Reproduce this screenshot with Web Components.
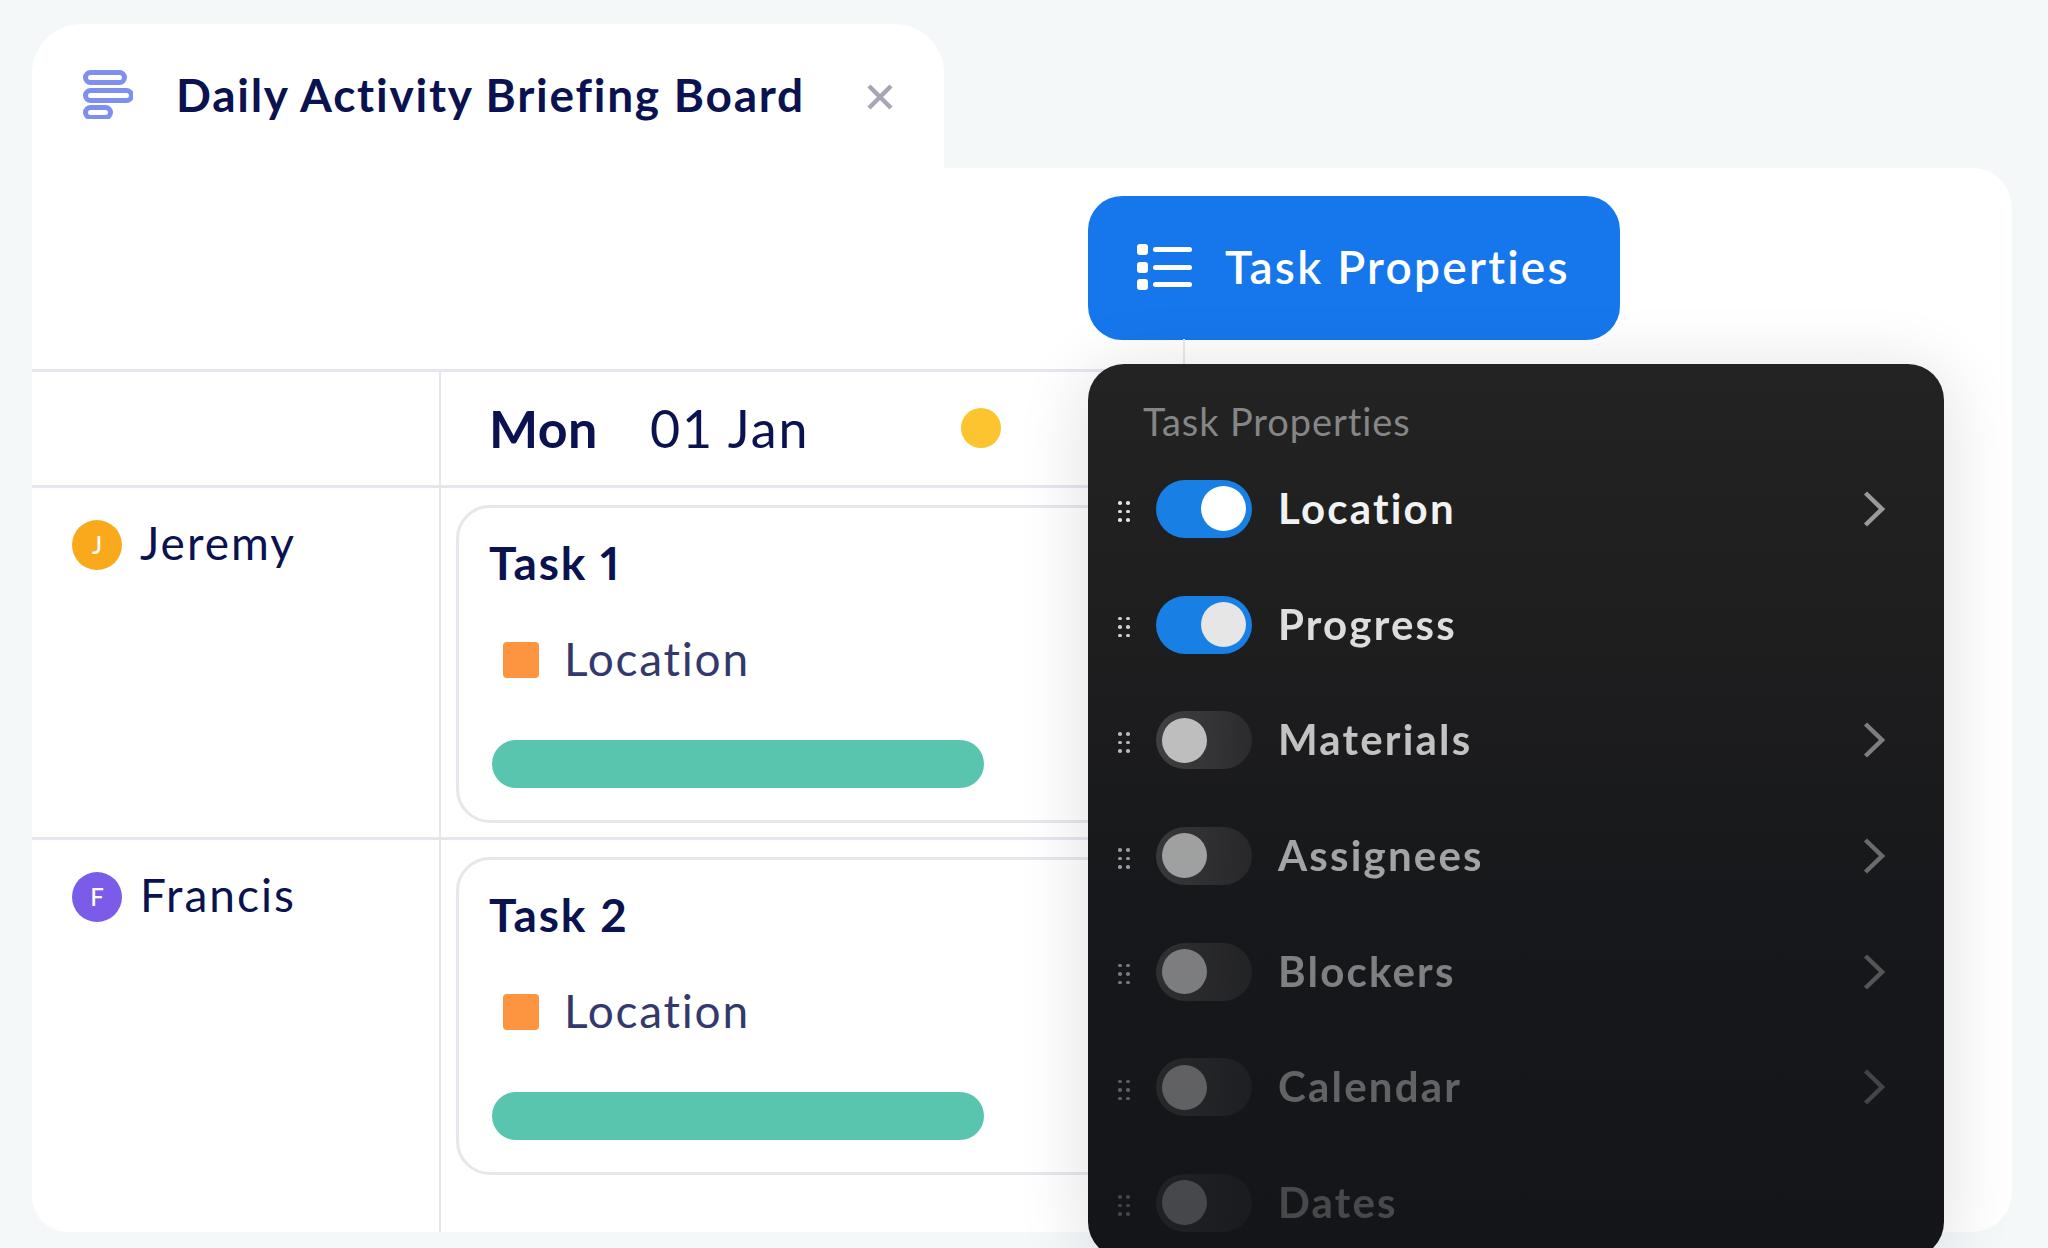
<!DOCTYPE html>
<html lang="en">
<head>
<meta charset="utf-8">
<title>Daily Activity Briefing Board</title>
<style>
	html, body { margin: 0; height: 1248px; overflow: hidden; background: #f5f8f9; }
	body { font-family: Lato, "Open Sans", sans-serif; color: #0b1250; }
</style>
</head>
<body>
<briefing-board>
	<board-tab slot="tab">Daily Activity Briefing Board</board-tab>
	<task-button slot="action">Task Properties</task-button>
	<board-row slot="rows" kind="head">
		<day-heading day="Mon" date="01 Jan"></day-heading>
	</board-row>
	<board-row slot="rows" name="Jeremy" initial="J" color="#fba91c">
		<task-card title-text="Task 1"></task-card>
	</board-row>
	<board-row slot="rows" kind="last" name="Francis" initial="F" color="#7b5ce8">
		<task-card title-text="Task 2"></task-card>
	</board-row>
	<property-panel slot="panel" heading="Task Properties">
		<property-row fade="1" on chevron>Location</property-row>
		<property-row fade=".9" on>Progress</property-row>
		<property-row fade=".78" chevron>Materials</property-row>
		<property-row fade=".64" chevron>Assignees</property-row>
		<property-row fade=".48" chevron>Blockers</property-row>
		<property-row fade=".35" chevron>Calendar</property-row>
		<property-row fade=".23">Dates</property-row>
	</property-panel>
</briefing-board>

<script>
// ─── Helper ──────────────────────────────────────────────────────────────────

/** @param {string} tag @param {string} html */
function define(tag, html, setup) {
	const tpl = document.createElement("template");
	tpl.innerHTML = html;
	customElements.define(tag, class extends HTMLElement {
		constructor() {
			super();
			this.attachShadow({ mode: "open" }).appendChild(tpl.content.cloneNode(true));
		}
		connectedCallback() {
			if (setup) setup(this, this.shadowRoot);
		}
	});
}

// ─── Board ───────────────────────────────────────────────────────────────────

define("briefing-board", `
	<style>
		:host { display: block; position: relative; width: 2048px; height: 1248px; padding: 24px 36px 0 32px; box-sizing: border-box; }
		.main {
			height: 1064px; background: #fff; border-radius: 0 40px 40px 36px; overflow: hidden;
		}
		.top { position: relative; height: 201px; padding: 28px 0 0 1056px; box-sizing: border-box; }
		.top::after {
			content: ""; position: absolute; left: 1151px; bottom: 0; width: 2px; height: 30px; background: #e6e7ee;
		}
		.panel { position: absolute; left: 1088px; top: 364px; }
	</style>
	<slot name="tab"></slot>
	<div class="main">
		<div class="top"><slot name="action"></slot></div>
		<slot name="rows"></slot>
	</div>
	<div class="panel"><slot name="panel"></slot></div>
`);

define("board-tab", `
	<style>
		:host {
			display: flex; align-items: flex-start; width: 912px; height: 144px; box-sizing: border-box;
			background: #fff; border-radius: 50px 50px 0 0; padding: 46px 0 0 51px;
		}
		svg { display: block; flex: none; }
		.icon { width: 50px; height: 49px; }
		.label {
			margin: -3px 0 0 43px; font: 700 46px/56px Lato, sans-serif; letter-spacing: 1.75px; color: #0b1250; white-space: nowrap;
		}
		.close { width: 26px; height: 26px; margin: 14px 0 0 62px; }
	</style>
	<svg class="icon" viewBox="0 0 50 49" fill="none" stroke="#7e8ff0" stroke-width="5">
		<rect x="2.5" y="2.5" width="39" height="10" rx="5"/>
		<rect x="2.5" y="20.5" width="46" height="10" rx="5"/>
		<rect x="2.5" y="37.5" width="25" height="10" rx="5"/>
	</svg>
	<span class="label"><slot></slot></span>
	<svg class="close" viewBox="0 0 26 26" fill="none" stroke="#a5a7b5" stroke-width="4.5">
		<path d="M2 2 24 24M24 2 2 24"/>
	</svg>
`);

define("task-button", `
	<style>
		:host {
			display: flex; align-items: center; width: 532px; height: 144px; box-sizing: border-box;
			background: #1677ec; border-radius: 34px; padding-left: 49px; color: #fff;
		}
		svg { width: 56px; height: 47px; flex: none; margin-top: -2px; }
		span { margin: -2px 0 0 32px; font: 600 46px/56px Lato, sans-serif; letter-spacing: 2.25px; white-space: nowrap; }
	</style>
	<svg viewBox="0 0 56 47" fill="#fff">
		<rect x="0" y="0" width="11" height="11" rx="3"/>
		<rect x="0" y="18" width="11" height="11" rx="3"/>
		<rect x="0" y="35" width="11" height="11" rx="3"/>
		<rect x="16" y="3" width="39" height="5" rx="2.5"/>
		<rect x="16" y="21" width="39" height="5" rx="2.5"/>
		<rect x="16" y="38" width="39" height="5" rx="2.5"/>
	</svg>
	<span><slot></slot></span>
`);

// ─── Grid rows ───────────────────────────────────────────────────────────────

define("board-row", `
	<style>
		:host {
			display: grid; grid-template-columns: 409px 1fr; width: 1100px; border-top: 3px solid #e6e7ee; height: 349px; overflow: hidden;
		}
		:host([kind="head"]) { height: 113px; }
		:host([kind="last"]) { height: 392px; }
		.who { display: flex; align-items: flex-start; gap: 18px; padding: 30px 0 0 40px; border-right: 2px solid #e6e7ee; font: 400 46px/50px Lato, sans-serif; letter-spacing: 2px; color: #0b1250; }
		.avatar {
			width: 50px; height: 50px; border-radius: 50%; color: #fff; flex: none; margin-top: 2px;
			display: flex; align-items: center; justify-content: center; font: 500 24px/1 Lato, sans-serif; letter-spacing: 0;
		}
		.avatar:empty { display: none; }
		.cell { min-width: 0; }
		:host(:not([kind="head"])) .cell { padding: 17px 0 0 15px; }
	</style>
	<div class="who"><span class="avatar"></span><span class="name"></span></div>
	<div class="cell"><slot></slot></div>
`, (el, root) => {
	root.querySelector(".name").textContent = el.getAttribute("name") || "";
	const avatar = root.querySelector(".avatar");
	avatar.textContent = el.getAttribute("initial") || "";
	avatar.style.background = el.getAttribute("color") || "";
});

define("day-heading", `
	<style>
		:host { display: flex; align-items: center; height: 113px; padding-left: 48px; color: #0b1250; }
		b { width: 161px; margin-top: -2px; font: 700 52px/60px Lato, sans-serif; letter-spacing: .4px; }
		span { width: 311px; margin-top: -2px; font: 400 52px/60px Lato, sans-serif; letter-spacing: 1.9px; }
		i { width: 40px; height: 40px; margin-top: -1px; border-radius: 50%; background: #fcc42e; }
	</style>
	<b></b><span></span><i></i>
`, (el, root) => {
	root.querySelector("b").textContent = el.getAttribute("day");
	root.querySelector("span").textContent = el.getAttribute("date");
});

define("task-card", `
	<style>
		:host {
			display: block; width: 760px; height: 318px; box-sizing: border-box; border: 3px solid #e6e7ee; border-radius: 34px;
			padding: 27px 0 0 30px; background: #fff;
		}
		h3 { margin: 0; font: 700 46px/56px Lato, sans-serif; letter-spacing: 1.9px; color: #0b1250; font-variant-numeric: proportional-nums; }
		.loc { display: flex; align-items: center; height: 56px; margin: 41px 0 0 14px; font: 400 46px/56px Lato, sans-serif; letter-spacing: 1.75px; color: #333a6b; }
		.loc span { margin-top: -3px; }
		.loc i { width: 36px; height: 36px; border-radius: 4px; background: #fd9440; margin-right: 25px; }
		.bar { width: 492px; height: 48px; margin: 52px 0 0 3px; border-radius: 24px; background: #5ac5ae; }
	</style>
	<h3></h3>
	<div class="loc"><i></i><span>Location</span></div>
	<div class="bar"></div>
`, (el, root) => {
	root.querySelector("h3").textContent = el.getAttribute("title-text");
});

// ─── Property panel ──────────────────────────────────────────────────────────

define("property-panel", `
	<style>
		:host {
			display: block; width: 856px; height: 894px; box-sizing: border-box; padding-top: 36px; border-radius: 36px;
			background: linear-gradient(180deg, #232323 0%, #1e1e1f 30%, #17181b 60%, #141519 100%);
			box-shadow: 0 8px 70px rgba(20, 24, 40, .14);
		}
		h4 { margin: 0 0 9px 55px; font: 400 38px/42px Lato, sans-serif; letter-spacing: .9px; color: #868686; }
	</style>
	<h4></h4>
	<slot></slot>
`, (el, root) => {
	root.querySelector("h4").textContent = el.getAttribute("heading");
});

define("property-row", `
	<style>
		:host { display: flex; align-items: center; height: 115.7px; padding-left: 30px; position: relative; }
		.grip { width: 11px; flex: none; display: grid; grid-template-columns: 3px 3px; gap: 5px; margin-top: 5px; opacity: var(--fade); }
		.grip i { width: 3.5px; height: 3.5px; border-radius: 50%; background: #e4e4e4; }
		.switch {
			position: relative; flex: none; width: 96px; height: 58px; margin-left: 27px; border-radius: 29px;
			background: linear-gradient(90deg, #4b4b4d, #303033); opacity: var(--fade);
		}
		:host([on]) .switch { background: #1880e4; opacity: 1; }
		.knob { position: absolute; left: 6px; top: 6.5px; width: 45px; height: 45px; border-radius: 50%; background: #ececec; }
		:host([on]) .knob { left: 45px; background: #fff; filter: brightness(var(--fade)); }
		.name {
			margin: -2px 0 0 26px; font: 700 42px/50px Lato, sans-serif; letter-spacing: 2.2px; color: #f2f2f2; opacity: var(--fade);
		}
		.chev { position: absolute; right: 59px; top: 40px; width: 22px; height: 36px; opacity: var(--fade); display: none; }
		:host([chevron]) .chev { display: block; }
	</style>
	<div class="grip"><i></i><i></i><i></i><i></i><i></i><i></i></div>
	<div class="switch"><div class="knob"></div></div>
	<div class="name"><slot></slot></div>
	<svg class="chev" viewBox="0 0 22 36" fill="none" stroke="#9a9a9a" stroke-width="4.5"><path d="M2.5 2 19 18 2.5 34"/></svg>
`, (el) => {
	el.style.setProperty("--fade", el.getAttribute("fade") || "1");
});
</script>
</body>
</html>
